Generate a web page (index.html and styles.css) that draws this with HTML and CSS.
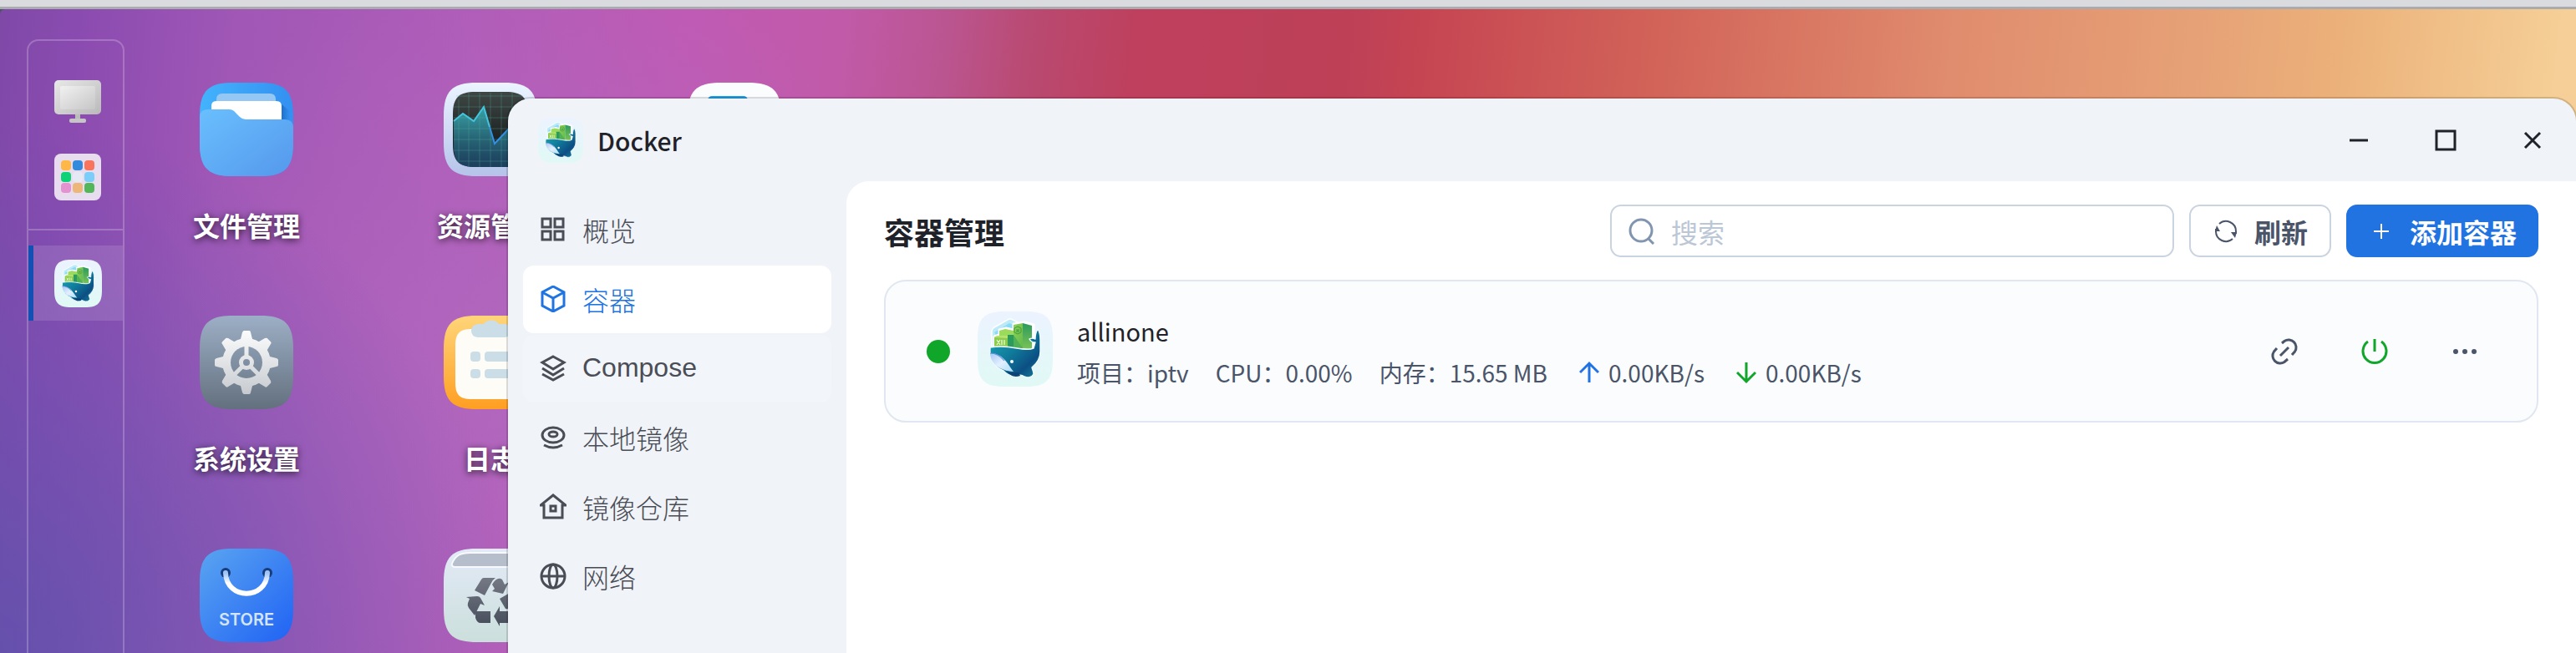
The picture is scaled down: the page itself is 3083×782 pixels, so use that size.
FILE: index.html
```html
<!DOCTYPE html>
<html lang="zh-CN">
<head>
  <meta charset="UTF-8">
  <meta name="viewport" content="width=device-width, initial-scale=1.0">
  <title>Docker</title>
  <link rel="stylesheet" href="styles.css">
</head>
<body>

<!-- 公用图标定义 -->
<svg class="defs" aria-hidden="true">
  <defs>
    <linearGradient id="g-tile" x1="0" y1="0" x2="0" y2="1"><stop offset="0" stop-color="#ecf3ff"/><stop offset="1" stop-color="#e0f9f5"/></linearGradient>
    <linearGradient id="g-whale" x1="0" y1="0" x2="1" y2="1"><stop offset="0" stop-color="#1cabbb"/><stop offset=".45" stop-color="#107c9c"/><stop offset=".75" stop-color="#0c4f83"/><stop offset="1" stop-color="#1588a0"/></linearGradient>
    <linearGradient id="g-belly" x1="0" y1="0" x2="1" y2="1"><stop offset="0" stop-color="#a9c8f3"/><stop offset=".5" stop-color="#e3f0ff"/><stop offset="1" stop-color="#a8dcf4"/></linearGradient>
    <linearGradient id="g-tower" x1="0" y1="0" x2="1" y2="1"><stop offset="0" stop-color="#8fd354"/><stop offset="1" stop-color="#62b84f"/></linearGradient>
    <linearGradient id="g-side" x1="0" y1="0" x2="0" y2="1"><stop offset="0" stop-color="#2c9a5c"/><stop offset="1" stop-color="#79c356"/></linearGradient>
  </defs>
  <symbol id="whale" viewBox="0 0 90 90">
    <path fill="url(#g-tile)" d="M0 32C0 8 8 0 32 0h26c24 0 32 8 32 32v26c0 24-8 32-32 32H32C8 90 0 82 0 58z"/>
    <path fill="#bdeaf8" stroke="#fff" stroke-width="1.5" d="M17 42V24q0-3 3-5L36 10q3-2 6 0l16 8v26z"/>
    <path fill="#8adcf3" d="M20 25 38 14l14 6-24 18z"/>
    <path fill="none" stroke="#fff" stroke-width="3" stroke-linejoin="round" d="M20 43V30l6-2v-6l8-2 9 2v-7l13-2 11 3v28"/>
    <path fill="#9cda5c" d="m26 23 7-2 10 2v8H26z"/>
    <path fill="#2b9b5b" d="M36 28h8v15h-8z"/>
    <path fill="#8ccc4c" d="m20 31 2-1 14 1v12H20z"/>
    <path fill="#b4e372" d="m20 31 3-2h13v3z"/>
    <path fill="url(#g-tower)" d="m43 16 11-2v30H43z"/>
    <path fill="#4fb057" d="m43 28 11 16H43z"/>
    <path fill="url(#g-side)" d="m54 14 11 3v28l-11-1z"/>
    <path fill="none" stroke="#3f9a3f" stroke-width="1" d="m48 18 4 2v5l-4 2-4-2v-5zM47 21v4m2-4v4m-2-2h2"/>
    <path fill="none" stroke="#f0ffe0" stroke-width="1.2" d="m23 34 4 6m0-6-4 6m6-6v6m3-6v6"/>
    <path fill="url(#g-whale)" stroke="#effcff" stroke-width="1.4" stroke-linejoin="round" d="M15 43c12-2 22-1 32 1s16 2 20 0l2-7c-3 0-6-2-7-4 2-1 5-1 7 0 0-5 1-9 3-12 3 5 3 8 3 13v14c0 9-5 15-10 19 1 4 2 5 2 8-2 4-7 5-11 3-3-2-7-2-10 0-8-1-12-3-15-7C19 66 14 56 15 43z"/>
    <path fill="#0b4475" d="M35 71c5 3 9 2 14 2l2 4c-6 2-12 1-16-6z"/>
    <path fill="url(#g-belly)" d="M15 50c15 0 20 11 28 22C26 71 15 62 15 50z"/>
    <path fill="none" stroke="#6191dc" stroke-width="1.2" d="M15 50c8 0 13 4 17 9"/>
    <circle cx="41" cy="60" r="2" fill="#fff"/>
  </symbol>
</svg>

<div class="top-strip"></div>

<div class="desktop">
  <!-- 左侧任务栏 -->
  <aside class="dock">
    <div class="dock-group">
      <button class="dock-item" aria-label="monitor">
        <svg width="56" height="56" viewBox="0 0 56 56">
          <linearGradient id="m1" x1="0" y1="0" x2="1" y2="1"><stop offset="0" stop-color="#e8e8e8"/><stop offset="1" stop-color="#b9b9b9"/></linearGradient>
          <linearGradient id="m2" x1="0" y1="0" x2="1" y2="1"><stop offset="0" stop-color="#f1f1f1"/><stop offset="1" stop-color="#c6c6c6"/></linearGradient>
          <path fill="#bcbcbc" d="M25 43h6v8h-6z"/>
          <rect x="18" y="48" width="20" height="5" rx="2" fill="#c6c6c6"/>
          <rect y="2" width="56" height="41" rx="5" fill="url(#m1)"/>
          <rect x="7" y="9" width="42" height="28" rx="2" fill="url(#m2)"/>
        </svg>
      </button>
      <button class="dock-item" aria-label="apps">
        <svg width="56" height="56" viewBox="0 0 56 56">
          <rect width="56" height="56" rx="8" fill="#e8dcef"/>
          <rect x="8" y="8" width="12" height="12" rx="4" fill="#ffb848"/>
          <rect x="22" y="8" width="12" height="12" rx="4" fill="#338bde"/>
          <rect x="36" y="8" width="12" height="12" rx="4" fill="#f8745c"/>
          <rect x="8" y="22" width="12" height="12" rx="4" fill="#0dd276"/>
          <rect x="22" y="22" width="12" height="12" rx="4" fill="#e5e9f6"/>
          <rect x="36" y="22" width="12" height="12" rx="4" fill="#7bcef9"/>
          <rect x="8" y="35" width="12" height="12" rx="4" fill="#e493d0"/>
          <rect x="22" y="35" width="12" height="12" rx="4" fill="#ecb778"/>
          <rect x="36" y="35" width="12" height="12" rx="4" fill="#52b75a"/>
        </svg>
      </button>
    </div>
    <button class="dock-item dock-active" aria-label="docker">
      <svg width="57" height="57"><use href="#whale"/></svg>
    </button>
  </aside>

  <!-- 桌面图标 -->
  <main class="apps">
    <a class="app" href="#files">
      <svg class="app-icon" viewBox="0 0 112 112">
        <linearGradient id="f1"><stop offset="0" stop-color="#43b3fc"/><stop offset="1" stop-color="#3390f1"/></linearGradient>
        <linearGradient id="f2" x1="0" y1="0" x2="1" y2="1"><stop offset="0" stop-color="#69bffe"/><stop offset="1" stop-color="#5598ec"/></linearGradient>
        <linearGradient id="f3" x1="0" y1="0" x2="1" y2="0"><stop offset="0" stop-color="#1766c4" stop-opacity=".8"/><stop offset="1" stop-color="#1766c4" stop-opacity="0"/></linearGradient>
        <path fill="url(#f1)" d="M0 40C0 10 10 0 40 0h32c30 0 40 10 40 40v32c0 30-10 40-40 40H40C10 112 0 102 0 72z"/>
        <path fill="url(#f3)" d="M98 26l10 8v14H98z"/>
        <path fill="#94c7f3" d="M20 24v-4q0-7 7-7h57q7 0 7 7v4z"/>
        <path fill="#fff" d="M14 34v-6q0-6 6-6h72q6 0 6 6v20H14z"/>
        <path fill="url(#f2)" d="M0 42q0-10 9-10h26q5 0 8 4l5 5q3 3 7 3h47q10 0 10 10v18c0 30-10 40-40 40H40C10 112 0 102 0 72z"/>
      </svg>
      <span class="app-name">文件管理</span>
    </a>
    <a class="app" href="#resource">
      <svg class="app-icon" viewBox="0 0 112 112">
        <linearGradient id="r1" x1="0" y1="0" x2="0" y2="1"><stop offset="0" stop-color="#ebf4ff"/><stop offset="1" stop-color="#b5c3ea"/></linearGradient>
        <linearGradient id="r2" x1="0" y1="0" x2="0" y2="1"><stop offset="0" stop-color="#3f4745"/><stop offset=".6" stop-color="#1e2424"/><stop offset="1" stop-color="#1c2f45"/></linearGradient>
        <linearGradient id="r3" x1="0" y1="0" x2="0" y2="1"><stop offset="0" stop-color="#37a3a6"/><stop offset="1" stop-color="#1c4468" stop-opacity=".7"/></linearGradient>
        <path fill="url(#r1)" d="M0 40C0 10 10 0 40 0h32c30 0 40 10 40 40v32c0 30-10 40-40 40H40C10 112 0 102 0 72z"/>
        <path fill="url(#r2)" d="M11 38c0-20 7-27 27-27h36c20 0 27 7 27 27v36c0 20-7 27-27 27H38c-20 0-27-7-27-27z"/>
        <path fill="url(#r3)" d="M12 46l11-9 13 9 12-17 13 44 16-17 13-8 11 6v20c0 20-7 27-27 27H38c-20 0-26-7-26-27z"/>
        <path fill="none" stroke="#58b69f" stroke-opacity=".3" stroke-width="1" d="M18 20v73M30 12v89M43 12v89M56 12v89M69 12v89M82 12v89M15 16h80M12 29h88M12 42h88M12 55h88M12 68h88M12 81h88M15 94h80"/>
        <path fill="none" stroke="#43c5df" stroke-width="2" d="M12 46l11-9 13 9 12-17 7 24"/>
        <path fill="none" stroke="#3390e4" stroke-width="2" d="M55 53l6 20 16-17 13-8 10 6"/>
      </svg>
      <span class="app-name">资源管理</span>
    </a>
    <a class="app" href="#other" aria-label="app">
      <svg class="app-icon" viewBox="0 0 112 112">
        <path fill="#fbfcfd" d="M0 40C0 10 10 0 40 0h32c30 0 40 10 40 40v32c0 30-10 40-40 40H40C10 112 0 102 0 72z"/>
        <rect x="24" y="16" width="48" height="40" rx="5" fill="#219fe5"/>
      </svg>
    </a>
    <a class="app" href="#settings">
      <svg class="app-icon" viewBox="0 0 112 112">
        <linearGradient id="s1" x1="0" y1="0" x2="0" y2="1"><stop offset="0" stop-color="#9dafc6"/><stop offset="1" stop-color="#63707e"/></linearGradient>
        <linearGradient id="s2" x1="0" y1="0" x2="0" y2="1"><stop offset="0" stop-color="#fdfdfe"/><stop offset="1" stop-color="#c5c9ce"/></linearGradient>
        <mask id="gear">
          <g fill="#fff">
            <circle cx="56" cy="56" r="29"/>
            <path id="teeth" d="M48 32l3-12q1-2 2-2h6q2 0 2 2l3 12zM48 80l3 12q1 2 2 2h6q2 0 2-2l3-12z"/>
            <use href="#teeth" transform="rotate(45 56 56)"/>
            <use href="#teeth" transform="rotate(90 56 56)"/>
            <use href="#teeth" transform="rotate(135 56 56)"/>
          </g>
          <circle cx="56" cy="56" r="19"/>
          <circle cx="56" cy="56" r="9" fill="#fff"/>
          <path stroke="#fff" stroke-width="5" d="M56 56V34M56 56l16 16M56 56L40 72"/>
          <circle cx="56" cy="56" r="4"/>
        </mask>
        <path fill="url(#s1)" d="M0 40C0 10 10 0 40 0h32c30 0 40 10 40 40v32c0 30-10 40-40 40H40C10 112 0 102 0 72z"/>
        <rect x="16" y="16" width="80" height="80" fill="url(#s2)" mask="url(#gear)"/>
      </svg>
      <span class="app-name">系统设置</span>
    </a>
    <a class="app" href="#log">
      <svg class="app-icon" viewBox="0 0 112 112">
        <linearGradient id="l1" x1="0" y1="0" x2="0" y2="1"><stop offset="0" stop-color="#ffd579"/><stop offset="1" stop-color="#ff9f22"/></linearGradient>
        <path fill="url(#l1)" d="M0 40C0 10 10 0 40 0h32c30 0 40 10 40 40v32c0 30-10 40-40 40H40C10 112 0 102 0 72z"/>
        <path fill="#fdfcf7" d="M14 36c0-15 5-20 20-20h44c15 0 20 5 20 20v44c0 15-5 20-20 20H34c-15 0-20-5-20-20z"/>
        <path fill="#cbdde7" d="M41 10h7c3-6 15-6 18 0h8q7 2 7 8t-7 8H41q-8-1-8-8t8-8z"/>
        <g fill="#cbdde7"><rect x="32" y="43" width="12" height="12" rx="4"/><rect x="49" y="43" width="34" height="12" rx="4"/><rect x="32" y="64" width="12" height="11" rx="4"/><rect x="49" y="64" width="34" height="11" rx="4"/></g>
      </svg>
      <span class="app-name">日志</span>
    </a>
    <a class="app app-first" href="#store">
      <svg class="app-icon" viewBox="0 0 112 112">
        <linearGradient id="t1" x1="0" y1="0" x2="1" y2="1"><stop offset="0" stop-color="#5aa5f1"/><stop offset="1" stop-color="#2062f4"/></linearGradient>
        <linearGradient id="t2" x1="0" y1="0" x2="0" y2="1"><stop offset="0" stop-color="#9cc4f8"/><stop offset=".5" stop-color="#fff"/></linearGradient>
        <path fill="url(#t1)" d="M0 40C0 10 10 0 40 0h32c30 0 40 10 40 40v32c0 30-10 40-40 40H40C10 112 0 102 0 72z"/>
        <circle cx="31" cy="29" r="6" fill="#173c7c"/><circle cx="81" cy="29" r="6" fill="#173c7c"/>
        <path fill="none" stroke="url(#t2)" stroke-width="6" stroke-linecap="round" d="M31 29C32 62 80 62 81 29"/>
        <text class="store-text" x="56" y="92" text-anchor="middle">STORE</text>
      </svg>
    </a>
    <a class="app" href="#trash" aria-label="trash">
      <svg class="app-icon" viewBox="0 0 112 112">
        <linearGradient id="b1" x1="0" y1="0" x2="0" y2="1"><stop offset="0" stop-color="#e3eaf7"/><stop offset="1" stop-color="#cbdfdc"/></linearGradient>
        <linearGradient id="b2" x1="0" y1="0" x2="0" y2="1"><stop offset="0" stop-color="#757984"/><stop offset="1" stop-color="#474d5c"/></linearGradient>
        <path fill="url(#b1)" d="M0 40C0 10 10 0 40 0h32c30 0 40 10 40 40v32c0 30-10 40-40 40H40C10 112 0 102 0 72z"/>
        <path fill="#b6bdcb" stroke="#f7f9fc" stroke-width="2" d="M10 18C14 8 20 5 32 5h48c12 0 18 3 22 13q1 4-4 4H14q-5 0-4-4z"/>
        <path fill="url(#b2)" d="M37 50l8-13q1-2 3-2h14q-3 2-5 6l-8 15zM58 51l3-3-3-5q6-10 12-6l3 6 5-3-7 14zM27 58l13-1q3 0 4 2l5 9-5-2-7 14-7-9q-2-3-1-6l2-5zM38 75h18v14H44q-4 0-6-6zM60 81l7-12v6h20l-5 11q-2 3-5 3H67v4zM67 60l12-7 7 13q-4 7-12 6z"/>
      </svg>
    </a>
  </main>

  <!-- Docker 窗口 -->
  <section class="window">
    <header class="window-header">
      <svg width="54" height="54"><use href="#whale"/></svg>
      <h1 class="window-title">Docker</h1>
      <div class="window-controls">
        <button aria-label="minimize"><svg width="26" height="26" viewBox="0 0 26 26"><path d="M2 13h22"/></svg></button>
        <button aria-label="maximize"><svg width="26" height="26" viewBox="0 0 26 26"><path d="M2 2h22v22H2z"/></svg></button>
        <button aria-label="close"><svg width="26" height="26" viewBox="0 0 26 26"><path d="M4 4l18 18M22 4L4 22"/></svg></button>
      </div>
    </header>
    <div class="window-body">
      <nav class="menu">
        <a class="menu-item" href="#overview"><svg class="icon" viewBox="0 0 32 32"><path d="M3 3h10v10H3zM18 3h10v10H18zM3 18h10v10H3zM18 18h10v10H18z"/></svg>概览</a>
        <a class="menu-item selected" href="#container"><svg class="icon" viewBox="0 0 32 32"><path d="M16 1l13 7v16l-13 7-13-7V8zM3 8l13 7 13-7M16 15v16"/></svg>容器</a>
        <a class="menu-item hovered" href="#compose"><svg class="icon" viewBox="0 0 32 32"><path d="M16 2l13 7-13 8L3 9zM3 16l13 8 13-8M3 23l13 7 13-7"/></svg>Compose</a>
        <a class="menu-item" href="#images"><svg class="icon" viewBox="0 0 32 32"><ellipse cx="16" cy="13" rx="13" ry="9"/><ellipse cx="16" cy="12" rx="5" ry="3"/><path d="M5 25q11 6 22 0"/></svg>本地镜像</a>
        <a class="menu-item" href="#registry"><svg class="icon" viewBox="0 0 32 32"><path d="M1 14h4v15h22V14h4L16 2zM13 15h6v6h-6z"/></svg>镜像仓库</a>
        <a class="menu-item" href="#network"><svg class="icon" viewBox="0 0 32 32"><circle cx="16" cy="16" r="14"/><ellipse cx="16" cy="16" rx="5" ry="14"/><path d="M2 16h28"/></svg>网络</a>
      </nav>
      <div class="content">
        <div class="toolbar">
          <h2 class="content-title">容器管理</h2>
          <label class="search">
            <svg width="32" height="32" viewBox="0 0 32 32"><circle cx="15" cy="15" r="13"/><path d="M24 25l6 6"/></svg>
            <input type="text" placeholder="搜索" aria-label="搜索">
          </label>
          <button class="btn">
            <svg width="28" height="28" viewBox="0 0 28 28"><path fill="none" stroke="currentColor" stroke-width="2" d="M6 5a12 12 0 0 1 20 9v3M22 23a12 12 0 0 1-20-9v-3"/><path fill="currentColor" d="M20 15h7l-2 7zM1 14l2-7 4 7z"/></svg>
            刷新
          </button>
          <button class="btn btn-primary">
            <svg width="28" height="28" viewBox="0 0 28 28"><path stroke="currentColor" stroke-width="2" d="M5 14h18M14 5v18"/></svg>
            添加容器
          </button>
        </div>

        <article class="card">
          <span class="status"></span>
          <svg class="card-icon" width="90" height="90"><use href="#whale"/></svg>
          <div class="card-info">
            <h3 class="card-name">allinone</h3>
            <div class="card-meta">
              <span>项目：iptv</span>
              <span>CPU：0.00%</span>
              <span>内存：15.65 MB</span>
              <span class="rate"><svg class="up" width="24" height="28" viewBox="0 0 24 28"><path d="M12 26V3M1 14L12 3l11 11"/></svg>0.00KB/s</span>
              <span class="rate"><svg class="down" width="24" height="28" viewBox="0 0 24 28"><path d="M12 2v23M1 14l11 11 11-11"/></svg>0.00KB/s</span>
            </div>
          </div>
          <div class="card-actions">
            <button aria-label="link"><svg class="icon" viewBox="0 0 32 32"><path d="M11 21L21 11M13 6l3-2.500a9 9 0 0 1 12.500 12.500L25 20M7 12l-3.500 4A9 9 0 0 0 16 28.500l4-3.500"/></svg></button>
            <button class="power" aria-label="power"><svg class="icon" viewBox="0 0 32 32"><path d="M16 1v15M8 4a14 14 0 1 0 16 0"/></svg></button>
            <button aria-label="more"><svg class="icon dots" viewBox="0 0 32 32"><circle cx="5" cy="16" r="3"/><circle cx="16" cy="16" r="3"/><circle cx="27" cy="16" r="3"/></svg></button>
          </div>
        </article>
      </div>
    </div>
  </section>
</div>

</body>
</html>
```
FILE: styles.css
```css
* {
  box-sizing: border-box;
}
body {
  margin: 0;
  height: 100vh;
  display: flex;
  flex-direction: column;
  overflow: hidden;
  font-family: "Noto Sans CJK SC", "Noto Sans", sans-serif;
  background-color: #4b5364;
}
h1, h2, h3 {
  margin: 0;
}
a {
  color: inherit;
  text-decoration: none;
}
button {
  padding: 0;
  border: none;
  background: none;
  color: inherit;
  font-family: inherit;
  cursor: pointer;
}
svg {
  display: block;
  flex-shrink: 0;
}
.defs {
  position: absolute;
  width: 0;
  height: 0;
}
.top-strip {
  height: 11px;
  flex-shrink: 0;
  background-color: #d9dbdf;
  border-bottom: 3px solid #a9abaf;
}
/* 桌面背景 */
.desktop {
  position: relative;
  flex: 1;
  min-height: 0;
  display: flex;
  overflow: hidden;
  border-top-left-radius: 6px;
  background:
    radial-gradient(ellipse 620px 640px at 0 100%, rgba(92, 82, 172, 0.8), rgba(98, 82, 176, 0.45) 50%, rgba(104, 82, 180, 0) 100%),
    radial-gradient(ellipse 480px 520px at 640px 440px, rgba(176, 106, 192, 0.8), rgba(176, 106, 192, 0) 100%),
    linear-gradient(96deg, #7f49a8 0, #8a4bb0 3%, #a057b6 9%, #b05cb8 18%, #c05ab4 26%, #c15aa8 32%, #bb5590 36%, #b94a72 39%, #be405e 43%, #bd4057 51%, #c64552 54%, #d26459 63%, #e08c6e 74%, #e6a176 83%, #ecb27b 89%, #f5cf97 97%);
}
/* 任务栏 */
.dock {
  width: 117px;
  margin: 36px 0 0 32px;
  border: 2px solid rgba(255, 255, 255, 0.22);
  border-bottom: none;
  border-radius: 14px 14px 0 0;
}
.dock-group {
  display: flex;
  flex-direction: column;
  gap: 34px;
  padding: 45px 0 34px 4px;
  border-bottom: 2px solid rgba(255, 255, 255, 0.22);
}
.dock-item {
  display: flex;
  justify-content: center;
  width: 100%;
}
.dock-active {
  align-items: center;
  height: 90px;
  margin-top: 18px;
  border-left: 6px solid #1350b3;
  background-color: rgba(255, 255, 255, 0.12);
}
/* 应用网格 */
.apps {
  display: grid;
  grid-template-columns: repeat(3, 292px);
  grid-auto-rows: 279px;
  align-content: start;
  margin-top: 88px;
}
.app {
  display: flex;
  flex-direction: column;
  align-items: center;
  gap: 34px;
}
.app-first {
  grid-column: 1;
}
.app-icon {
  width: 112px;
  height: 112px;
}
.app-name {
  color: #fff;
  font-size: 32px;
  font-weight: bold;
  line-height: 48px;
  text-shadow: 0 2px 8px rgba(0, 0, 0, 0.75);
}
.store-text {
  font: 600 20px Inter, sans-serif;
  fill: #d3e4fd;
}
/* 窗口 */
.window {
  position: absolute;
  top: 107px;
  right: 0;
  bottom: 0;
  left: 608px;
  display: flex;
  flex-direction: column;
  border-radius: 27px 27px 0 0;
  background-color: #f0f3f8;
  box-shadow: 0 0 0 2px rgba(0, 0, 0, 0.14);
}
.window-header {
  display: flex;
  align-items: center;
  height: 99px;
  flex-shrink: 0;
  padding: 0 39px 0 36px;
  color: #1f2329;
}
.window-title {
  flex: 1;
  margin-left: 17px;
  font-size: 30px;
  font-weight: 500;
  line-height: 48px;
}
.window-controls {
  display: flex;
  gap: 78px;
}
.window-controls path {
  fill: none;
  stroke: #1f2329;
  stroke-width: 3;
}
.window-body {
  display: flex;
  flex: 1;
  min-height: 0;
}
/* 侧边菜单 */
.menu {
  width: 405px;
  flex-shrink: 0;
  display: flex;
  flex-direction: column;
  gap: 2px;
  padding: 18px;
}
.menu-item {
  display: flex;
  align-items: center;
  gap: 19px;
  height: 81px;
  padding: 0 20px 2px;
  border-radius: 13px;
  color: #4a4d55;
  font-family: "Liberation Sans", "Noto Sans CJK SC", sans-serif;
  font-size: 32px;
  font-weight: 300;
}
.menu-item.hovered {
  background-color: #f2f5fa;
}
.menu-item.selected {
  background-color: #fff;
  color: #2074e2;
}
.icon {
  width: 32px;
  height: 32px;
  fill: none;
  stroke: currentColor;
  stroke-width: 3;
}
/* 内容区 */
.content {
  flex: 1;
  padding: 28px 45px;
  border-top-left-radius: 27px;
  background-color: #fff;
}
.toolbar {
  display: flex;
  align-items: center;
  gap: 18px;
  height: 63px;
  margin-bottom: 27px;
}
.content-title {
  flex: 1;
  color: #1f2329;
  font-size: 36px;
  line-height: 54px;
}
.search {
  display: flex;
  align-items: center;
  gap: 19px;
  width: 675px;
  height: 63px;
  padding: 0 20px;
  border: 2px solid #cad4e1;
  border-radius: 13px;
}
.search svg {
  fill: none;
  stroke: #8195b0;
  stroke-width: 3;
}
.search input {
  flex: 1;
  min-width: 0;
  padding: 0;
  border: none;
  outline: none;
  background: none;
  color: #1f2329;
  font-family: inherit;
  font-size: 32px;
}
.search input::placeholder {
  color: #bcc7d6;
}
.btn {
  display: flex;
  align-items: center;
  justify-content: center;
  gap: 20px;
  width: 170px;
  height: 63px;
  padding-left: 2px;
  border: 2px solid #cad4e1;
  border-radius: 13px;
  color: #4a5569;
  font-size: 32px;
  font-weight: bold;
}
.btn-primary {
  width: 230px;
  border-color: #2173e1;
  background-color: #2173e1;
  color: #fff;
}
/* 容器卡片 */
.card {
  display: flex;
  align-items: center;
  height: 171px;
  padding: 0 70px 0 49px;
  border: 2px solid #e1e7f0;
  border-radius: 26px;
  background-color: #fbfcfe;
}
.status {
  width: 28px;
  height: 28px;
  border-radius: 50%;
  background-color: #10a62a;
}
.card-icon {
  margin: 0 29px 6px 33px;
}
.card-info {
  flex: 1;
}
.card-name {
  color: #1f2329;
  font-size: 29px;
  font-weight: normal;
  line-height: 48px;
}
.card-meta {
  display: flex;
  gap: 32px;
  margin-top: 2px;
  color: #4a5569;
  font-size: 28px;
  line-height: 48px;
}
.rate {
  display: flex;
  align-items: center;
  gap: 11px;
  padding-left: 6px;
}
.rate svg {
  fill: none;
  stroke-width: 3;
}
.up {
  stroke: #2173e1;
}
.down {
  stroke: #10a62a;
}
.card-actions {
  display: flex;
  gap: 76px;
  color: #4a5569;
}
.power {
  color: #10a62a;
}
.dots {
  fill: currentColor;
  stroke: none;
}
```
